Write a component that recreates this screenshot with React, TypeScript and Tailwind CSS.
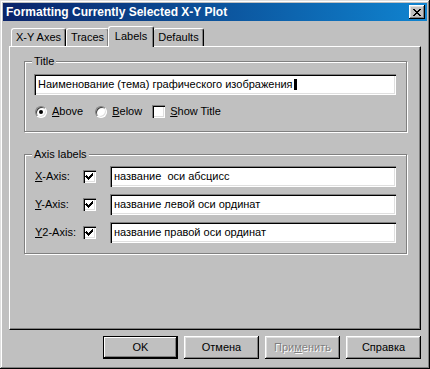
import React from 'react';

const font = "font-['Liberation_Sans',Arial,sans-serif]";

const raised =
  'shadow-[inset_-1px_-1px_0_#000,inset_1px_1px_0_#fff,inset_-2px_-2px_0_#808080,inset_2px_2px_0_#dfdfdf]';
const sunken =
  'shadow-[inset_1px_1px_0_#808080,inset_2px_2px_0_#000,inset_-1px_-1px_0_#fff,inset_-2px_-2px_0_#dfdfdf]';

function CheckBox({ checked }: { checked?: boolean }) {
  return (
    <span className={`w-[13px] h-[13px] bg-white flex items-center justify-center shrink-0 ${sunken}`}>
      {checked && (
        <svg width="9" height="9" viewBox="0 0 9 9" shapeRendering="crispEdges">
          <path
            d="M1 3h1v1h1v1h1v-1h1v-1h1v-1h1v-1h1v3h-1v1h-1v1h-1v1h-1v1h-1v-1h-1v-1h-1v-1h-1z"
            fill="#000"
          />
        </svg>
      )}
    </span>
  );
}

function Radio({ checked }: { checked?: boolean }) {
  return (
    <span className="w-[12px] h-[12px] rounded-full bg-white shrink-0 flex items-center justify-center border border-t-[#808080] border-l-[#808080] border-b-white border-r-white shadow-[inset_1px_1px_0_#404040,inset_-1px_-1px_0_#dfdfdf]">
      {checked && <span className="w-[4px] h-[4px] rounded-full bg-black" />}
    </span>
  );
}

function TextBox({ value, caret }: { value: string; caret?: boolean }) {
  return (
    <div className={`flex-1 h-[21px] bg-white flex items-center pl-[4px] text-black ${sunken}`}>
      <span className="whitespace-pre">{value}</span>
      {caret && <span className="w-[3px] h-[11px] bg-black ml-[1px]" />}
    </div>
  );
}

function Group({ label, className, children }: { label: string; className: string; children: React.ReactNode }) {
  return (
    <div
      className={`relative border border-[#808080] shadow-[inset_1px_1px_0_#fff,1px_1px_0_#fff] ${className}`}
    >
      <span className="absolute -top-[8px] left-[7px] px-[2px] bg-[#c0c0c0] leading-[14px]">{label}</span>
      {children}
    </div>
  );
}

function Tab({ label, active }: { label: string; active?: boolean }) {
  return (
    <div
      className={`flex items-center justify-center bg-[#c0c0c0] border-l border-t border-white border-r border-r-black rounded-t-[3px] shadow-[inset_-1px_0_0_#808080] ${
        active ? 'h-[21px] -mb-[1px] relative z-10 pb-[2px] -mx-[1px]' : 'h-[18px]'
      }`}
    >
      {label}
    </div>
  );
}

function Button({ label, primary, disabled, mn }: { label: string; primary?: boolean; disabled?: boolean; mn?: number }) {
  const text =
    mn === undefined ? (
      label
    ) : (
      <>
        {label.slice(0, mn)}
        <u className="underline-offset-[1px]">{label[mn]}</u>
        {label.slice(mn + 1)}
      </>
    );
  return (
    <div
      className={`w-[75px] h-[23px] flex items-center justify-center bg-[#c0c0c0] font-normal ${
        primary
          ? 'border border-black shadow-[inset_-1px_-1px_0_#000,inset_1px_1px_0_#fff,inset_-2px_-2px_0_#808080]'
          : raised
      } ${disabled ? 'text-[#808080] [text-shadow:1px_1px_0_#fff]' : 'text-black'}`}
    >
      <span className="font-normal">{text}</span>
    </div>
  );
}

export default function App() {
  return (
    <div
      className={`w-[430px] h-[369px] bg-[#c0c0c0] p-[3px] flex flex-col text-[11px] font-normal text-black ${font} shadow-[inset_-1px_-1px_0_#000,inset_1px_1px_0_#dfdfdf,inset_-2px_-2px_0_#808080,inset_2px_2px_0_#fff]`}
    >
      {/* title bar */}
      <div className="h-[18px] flex items-center bg-linear-to-r from-[#0a246a] to-[#1084d0] pl-[3px] pr-[2px]">
        <span className="text-white font-bold text-[12px]">Formatting Currently Selected X-Y Plot</span>
        <div className={`ml-auto w-[16px] h-[14px] bg-[#c0c0c0] flex items-center justify-center ${raised}`}>
          <svg width="8" height="7" viewBox="0 0 8 7" shapeRendering="crispEdges">
            <path
              d="M0 0h2v1h1v1h2v-1h1v-1h2v1h-1v1h-1v1h-1v1h1v1h1v1h1v1h-2v-1h-1v-1h-2v1h-1v1h-2v-1h1v-1h1v-1h1v-1h-1v-1h-1v-1h-1z"
              fill="#000"
            />
          </svg>
        </div>
      </div>

      {/* tabs */}
      <div className="mt-[5px] ml-[6px] flex flex-col">
        <div className="h-[20px] flex items-end pl-[2px]">
          <div className="w-[55px]">
            <Tab label="X-Y Axes" />
          </div>
          <div className="w-[43px]">
            <Tab label="Traces" />
          </div>
          <div className="w-[44px] relative z-10">
            <Tab label="Labels" active />
          </div>
          <div className="w-[51px]">
            <Tab label="Defaults" />
          </div>
        </div>

        <div className="w-[412px] h-[284px] border-l border-t border-white border-r border-b border-r-black border-b-black shadow-[inset_-1px_-1px_0_#808080] pt-[14px] pl-[14px]">
          <Group label="Title" className="w-[383px] h-[71px] pt-[12px] pl-[9px] pr-[10px]">
            <div className="flex">
              <TextBox value="Наименование (тема) графического изображения" caret />
            </div>
            <div className="flex items-center mt-[10px] pl-[1px] h-[13px]">
              <Radio checked />
              <span className="ml-[5px]">
                <u>A</u>bove
              </span>
              <span className="ml-[12px]">
                <Radio />
              </span>
              <span className="ml-[5px]">
                <u>B</u>elow
              </span>
              <span className="ml-[10px]">
                <CheckBox />
              </span>
              <span className="ml-[5px]">
                <u>S</u>how Title
              </span>
            </div>
          </Group>

          <Group label="Axis labels" className="w-[383px] h-[100px] mt-[22px] pt-[11px] pl-[10px] pr-[10px] flex flex-col gap-[7px]">
            {[
              ['X', '-Axis:', 'название  оси абсцисс'],
              ['Y', '-Axis:', 'название левой оси ординат'],
              ['Y', '2-Axis:', 'название правой оси ординат'],
            ].map(([m, rest, v], i) => (
              <div key={i} className="flex items-center">
                <span className="w-[48px] whitespace-pre">
                  <u>{m}</u>
                  {rest}
                </span>
                <CheckBox checked />
                <div className="ml-[14px] flex-1 flex">
                  <TextBox value={v} />
                </div>
              </div>
            ))}
          </Group>
        </div>
      </div>

      {/* buttons */}
      <div className="mt-[6px] flex justify-end gap-[6px] pr-[6px]">
        <Button label="OK" primary />
        <Button label="Отмена" />
        <Button label="Применить" disabled mn={3} />
        <Button label="Справка" />
      </div>
    </div>
  );
}
